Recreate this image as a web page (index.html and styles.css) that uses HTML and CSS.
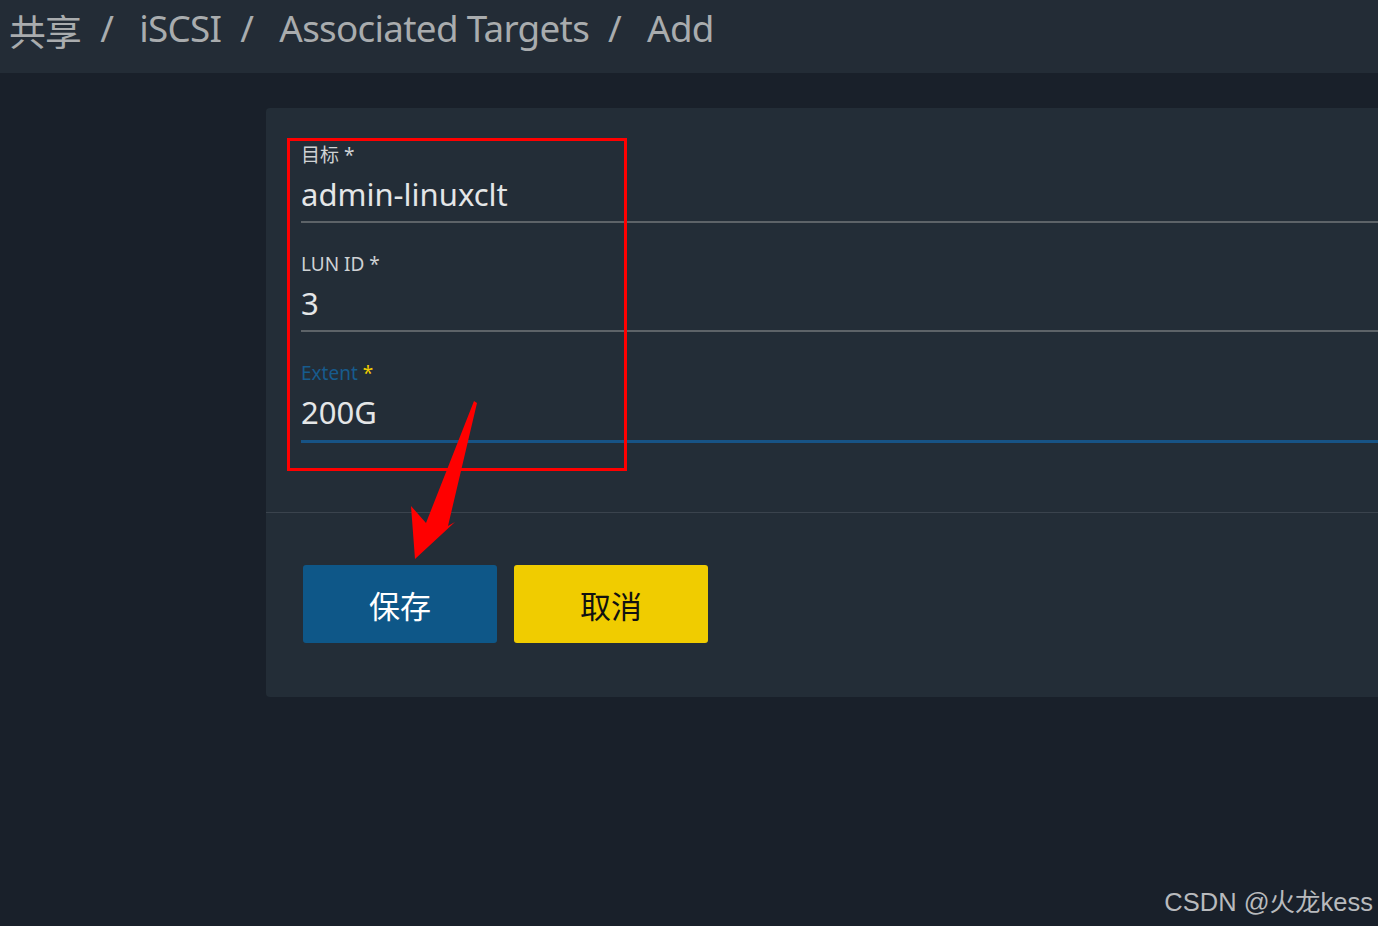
FILE: index.html
```html
<!DOCTYPE html>
<html lang="zh">
<head>
  <meta charset="UTF-8">
  <title>Associated Targets - Add</title>
  <link rel="stylesheet" href="styles.css">
</head>
<body>
  <div class="topbar">
    <span class="crumb">共享</span><span class="sep">/</span>
    <span class="crumb">iSCSI</span><span class="sep">/</span>
    <span class="crumb">Associated Targets</span><span class="sep">/</span>
    <span class="crumb">Add</span>
  </div>

  <div class="main">
    <div class="card">
      <div class="fields">
        <div class="field">
          <div class="label">目标 *</div>
          <div class="value">admin-linuxclt</div>
        </div>
        <div class="field">
          <div class="label">LUN ID *</div>
          <div class="value">3</div>
        </div>
        <div class="field focused">
          <div class="label">Extent <span class="req">*</span></div>
          <div class="value">200G</div>
        </div>
      </div>
      <div class="actions">
        <button class="btn save">保存</button>
        <button class="btn cancel">取消</button>
      </div>
    </div>
  </div>

  <!-- annotation drawn over the screenshot -->
  <div class="mark-box"></div>
  <svg class="mark-arrow" width="80" height="170" viewBox="0 0 80 170">
    <polygon points="63,0 66,2 37,125 44,121 4,158 0,105 15,122" fill="#ff0000"/>
  </svg>

  <div class="watermark">CSDN @火龙kess</div>
</body>
</html>
```

FILE: styles.css
```css
* {
  box-sizing: border-box;
}
html, body {
  margin: 0;
  height: 100%;
}
body {
  background: #19202a;
  font-family: "Noto Sans", "Noto Sans CJK SC", sans-serif;
  overflow: hidden;
  position: relative;
}

.topbar {
  height: 73px;
  background: #232c36;
  color: #a9acae;
  font-size: 36.8px;
  padding: 3px 0 0 9px;
  display: flex;
  align-items: flex-start;
  letter-spacing: -0.7px;
}
.topbar .sep {
  margin: 0 26px 0 19px;
}

.main {
  padding: 35px 0 0 266px;
}
.card {
  width: 1130px;
  background: #232d37;
  border-radius: 4px;
}
.fields {
  padding: 35px 0 69px 35px;
}
.field {
  margin-bottom: 29px;
}
.field:last-child {
  margin-bottom: 0;
}
.label {
  color: #cfd2d4;
  font-size: 19px;
  line-height: 24px;
}
.value {
  color: #e4e6e7;
  font-size: 31px;
  line-height: 44px;
  margin-top: 5px;
  padding-bottom: 5px;
  border-bottom: 2px solid #5d6368;
}
.focused .label {
  color: #175b8d;
}
.focused .label .req {
  color: #f0cc00;
}
.focused .value {
  border-bottom: 3px solid #175385;
  padding-bottom: 6px;
}

.actions {
  border-top: 1px solid #3a434d;
  padding: 52px 0 54px 37px;
  display: flex;
  gap: 17px;
}
.btn {
  width: 194px;
  height: 78px;
  border: none;
  border-radius: 3px;
  font-family: "Noto Sans CJK SC", sans-serif;
  font-size: 31px;
}
.save {
  background: #0e5788;
  color: #ffffff;
}
.cancel {
  background: #f0cc00;
  color: #111111;
}

.mark-box {
  position: absolute;
  left: 287px;
  top: 138px;
  width: 340px;
  height: 333px;
  border: 3px solid #ff0000;
}
.mark-arrow {
  position: absolute;
  left: 411px;
  top: 401px;
}

.watermark {
  position: absolute;
  right: 5px;
  bottom: 8px;
  color: #b8babd;
  font-family: "Liberation Sans", "Noto Sans CJK SC", sans-serif;
  font-size: 25.5px;
}
```
